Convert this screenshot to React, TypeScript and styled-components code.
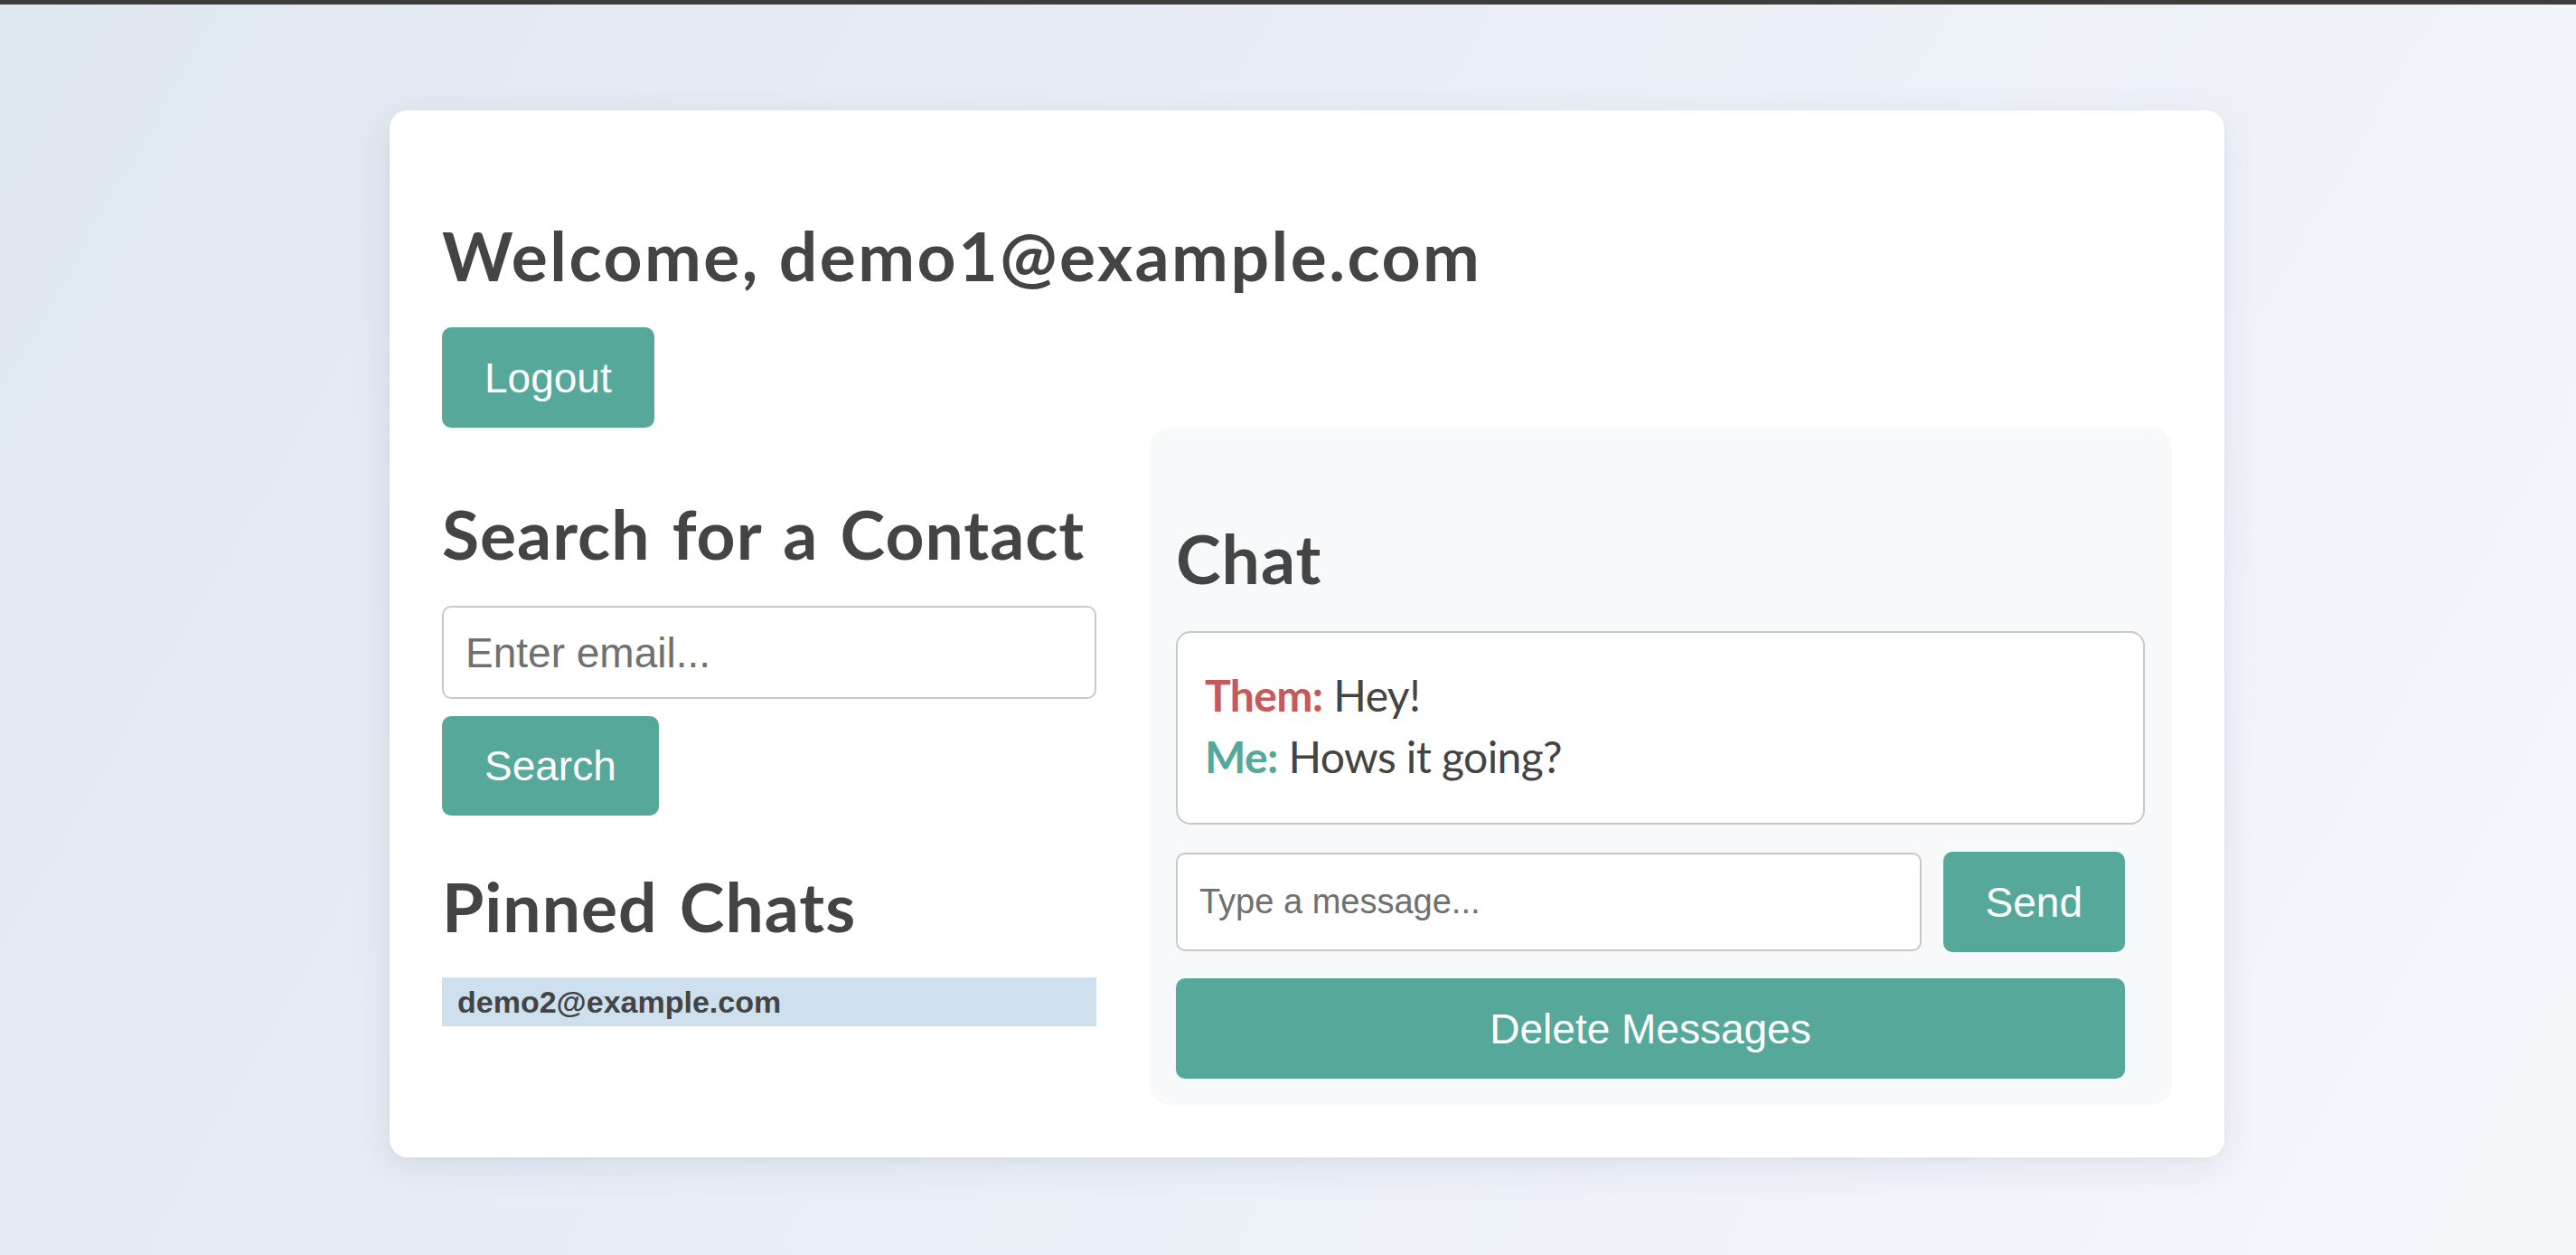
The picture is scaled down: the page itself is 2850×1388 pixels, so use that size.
import React from "react";
import styled, { createGlobalStyle } from "styled-components";

const GlobalStyle = createGlobalStyle`
  html, body {
    margin: 0;
    padding: 0;
  }
  body {
    font-family: "Lato", "Noto Sans", sans-serif;
    color: #444;
  }
  * { box-sizing: border-box; }
`;

const TEAL = "#56a99a";

const Page = styled.div`
  min-height: 100vh;
  border-top: 5px solid #3d3d3d;
  background: linear-gradient(120deg, #dfe7f1 0%, #e9eef6 45%, #f5f7fb 100%);
  display: flex;
  justify-content: center;
  align-items: flex-start;
  padding: 117px 0 0 42px;
`;

const Card = styled.main`
  width: 2030px;
  background: #ffffff;
  border-radius: 20px;
  padding: 58px;
  box-shadow: 0 10px 40px rgba(40, 60, 100, 0.09), 0 2px 6px rgba(40, 60, 100, 0.04);
`;

const Title = styled.h1`
  margin: 57px 0 35px;
  font-size: 75px;
  line-height: 90px;
  font-weight: 700;
  letter-spacing: 2.5px;
  color: #444;
`;

const Heading = styled.h2<{ $top?: number; $bottom?: number }>`
  margin: ${(p) => p.$top ?? 72}px 0 ${(p) => p.$bottom ?? 35}px;
  font-size: 75px;
  line-height: 90px;
  font-weight: 700;
  letter-spacing: 1px;
  word-spacing: 5px;
  color: #444;
`;

const Button = styled.button<{ $full?: boolean; $h?: number }>`
  display: block;
  height: ${(p) => p.$h ?? 111}px;
  width: ${(p) => (p.$full ? "100%" : "auto")};
  padding: 0 47px;
  border: none;
  border-radius: 10px;
  background: ${TEAL};
  color: #fff;
  font-family: "Liberation Sans", Arial, sans-serif;
  font-size: 46px;
  cursor: pointer;
  flex-shrink: 0;
`;

const Columns = styled.div`
  display: grid;
  grid-template-columns: 724px 1fr;
  column-gap: 59px;
  align-items: start;
`;

const LeftColumn = styled.section`
  display: flex;
  flex-direction: column;
  align-items: flex-start;
`;

const TextInput = styled.input<{ $h: number; $size: number }>`
  width: 100%;
  height: ${(p) => p.$h}px;
  padding: 0 24px;
  border: 2px solid #c9c9c9;
  border-radius: 10px;
  background: #fff;
  font-family: "Liberation Sans", Arial, sans-serif;
  font-size: ${(p) => p.$size}px;
  color: #333;
  &::placeholder {
    color: #707070;
  }
`;

const SearchForm = styled.div`
  width: 100%;
  display: flex;
  flex-direction: column;
  align-items: flex-start;
  gap: 19px;
`;

const PinnedList = styled.ul`
  list-style: none;
  margin: 0;
  padding: 0;
  width: 100%;
`;

const PinnedItem = styled.li`
  height: 54px;
  display: flex;
  align-items: center;
  padding: 0 17px;
  background: #cee0ee;
  font-family: "Liberation Sans", Arial, sans-serif;
  font-weight: 700;
  font-size: 34px;
  color: #444;
`;

const ChatPanel = styled.section`
  background: #f8f9fa;
  border-radius: 22px;
  padding: 27px 52px 29px 29px;
`;

const Messages = styled.div`
  margin-right: -22px;
  background: #fff;
  border: 2px solid #c9c9c9;
  border-radius: 16px;
  padding: 35px 30px 39px;
`;

const MessageLine = styled.div`
  font-size: 48px;
  line-height: 68px;
  letter-spacing: -0.6px;
  color: #444;
`;

const Sender = styled.span<{ $me?: boolean }>`
  font-weight: 700;
  color: ${(p) => (p.$me ? TEAL : "#c65a5b")};
`;

const SendRow = styled.div`
  display: flex;
  align-items: center;
  gap: 24px;
  margin: 30px 0 29px;
`;

export default function App() {
  return (
    <>
      <GlobalStyle />
      <Page>
        <Card>
          <Title>Welcome, demo1@example.com</Title>
          <Button>Logout</Button>
          <Columns>
            <LeftColumn>
              <Heading>Search for a Contact</Heading>
              <SearchForm>
                <TextInput $h={103} $size={46} placeholder="Enter email..." />
                <Button $h={110}>Search</Button>
              </SearchForm>
              <Heading $top={55} $bottom={34}>Pinned Chats</Heading>
              <PinnedList>
                <PinnedItem>demo2@example.com</PinnedItem>
              </PinnedList>
            </LeftColumn>
            <ChatPanel>
              <Heading $top={72} $bottom={36}>Chat</Heading>
              <Messages>
                <MessageLine>
                  <Sender>Them:</Sender> Hey!
                </MessageLine>
                <MessageLine>
                  <Sender $me>Me:</Sender> Hows it going?
                </MessageLine>
              </Messages>
              <SendRow>
                <TextInput $h={109} $size={38} placeholder="Type a message..." />
                <Button>Send</Button>
              </SendRow>
              <Button $full>Delete Messages</Button>
            </ChatPanel>
          </Columns>
        </Card>
      </Page>
    </>
  );
}
